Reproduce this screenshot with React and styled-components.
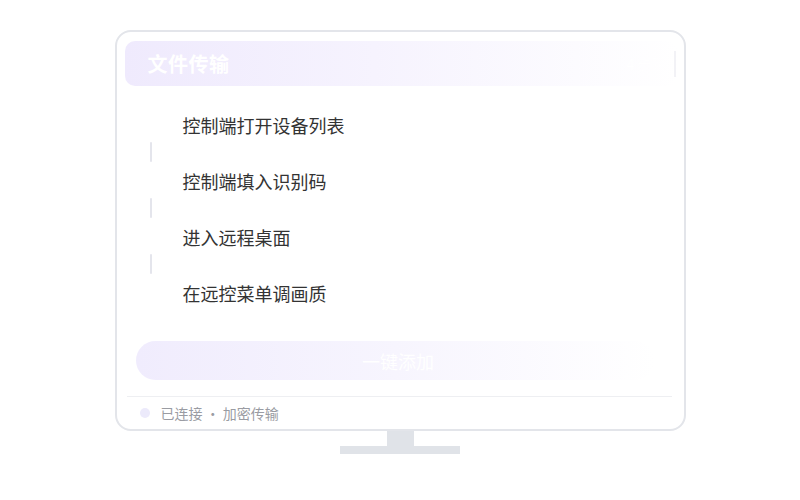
import React from "react";
import styled, { createGlobalStyle } from "styled-components";

const Global = createGlobalStyle`
  html, body { margin: 0; padding: 0; background: #ffffff; }
  body { font-family: "Noto Sans CJK SC", "Noto Sans", sans-serif; }
`;

const Page = styled.div`
  width: 800px;
  height: 500px;
  display: flex;
  flex-direction: column;
  align-items: center;
  padding-top: 30px;
  box-sizing: border-box;
`;

const Screen = styled.div`
  width: 571px;
  height: 401px;
  box-sizing: border-box;
  border: 2px solid #e3e5ea;
  border-radius: 16px;
  background: #fff;
  padding: 9px 6px 0 8px;
  display: flex;
  flex-direction: column;
`;

const Header = styled.div`
  height: 45px;
  flex-shrink: 0;
  border-radius: 10px;
  background: linear-gradient(90deg, #efeafd 0%, #f6f3fe 45%, #ffffff 100%);
  display: flex;
  align-items: center;
  justify-content: space-between;
  padding: 0 2px 0 23px;
`;

const Title = styled.div`
  color: #fff;
  font-size: 20px;
  font-weight: 700;
  letter-spacing: 0.5px;
`;

const Badge = styled.div`
  color: #fff;
  font-size: 14px;
  padding-right: 8px;
  border-right: 2px solid #f2f2f6;
  height: 26px;
  line-height: 26px;
`;

const Steps = styled.div`
  display: flex;
  flex-direction: column;
  padding: 24px 0 0 25px;
`;

const Step = styled.div`
  height: 30px;
  display: flex;
  align-items: center;
  padding-left: 33px;
  font-size: 18px;
  color: #333;
`;

const Connector = styled.div`
  width: 2px;
  height: 20px;
  margin: 2px 0 4px 0;
  background: #e4e5ec;
  border-radius: 1px;
`;

const Button = styled.div`
  margin: 33px 23px 0 11px;
  height: 39px;
  flex-shrink: 0;
  border-radius: 20px;
  background: linear-gradient(90deg, #f0ecfd 0%, #f7f5fe 50%, #ffffff 100%);
  color: #fff;
  font-size: 18px;
  display: flex;
  align-items: center;
  justify-content: center;
  padding-left: 6px;
`;

const Divider = styled.div`
  margin: 16px 6px 0 2px;
  height: 1px;
  flex-shrink: 0;
  background: #eeeff2;
`;

const Status = styled.div`
  display: flex;
  align-items: center;
  gap: 11px;
  padding-left: 15px;
  height: 33px;
  font-size: 14px;
  color: #9a9ca3;
`;

const Dot = styled.span`
  width: 10px;
  height: 10px;
  border-radius: 50%;
  background: #eceafb;
`;

const Neck = styled.div`
  width: 27px;
  height: 15px;
  background: #e0e3e8;
`;

const Base = styled.div`
  width: 120px;
  height: 8px;
  background: #e0e3e8;
`;

const steps = ["控制端打开设备列表", "控制端填入识别码", "进入远程桌面", "在远控菜单调画质"];

export default function App() {
  return (
    <>
      <Global />
      <Page>
        <Screen>
          <Header>
            <Title>文件传输</Title>
            <Badge>4 步骤</Badge>
          </Header>
          <Steps>
            {steps.map((s, i) => (
              <React.Fragment key={s}>
                {i > 0 && <Connector />}
                <Step>{s}</Step>
              </React.Fragment>
            ))}
          </Steps>
          <Button>一键添加</Button>
          <Divider />
          <Status>
            <Dot />
            已连接 · 加密传输
          </Status>
        </Screen>
        <Neck />
        <Base />
      </Page>
    </>
  );
}
